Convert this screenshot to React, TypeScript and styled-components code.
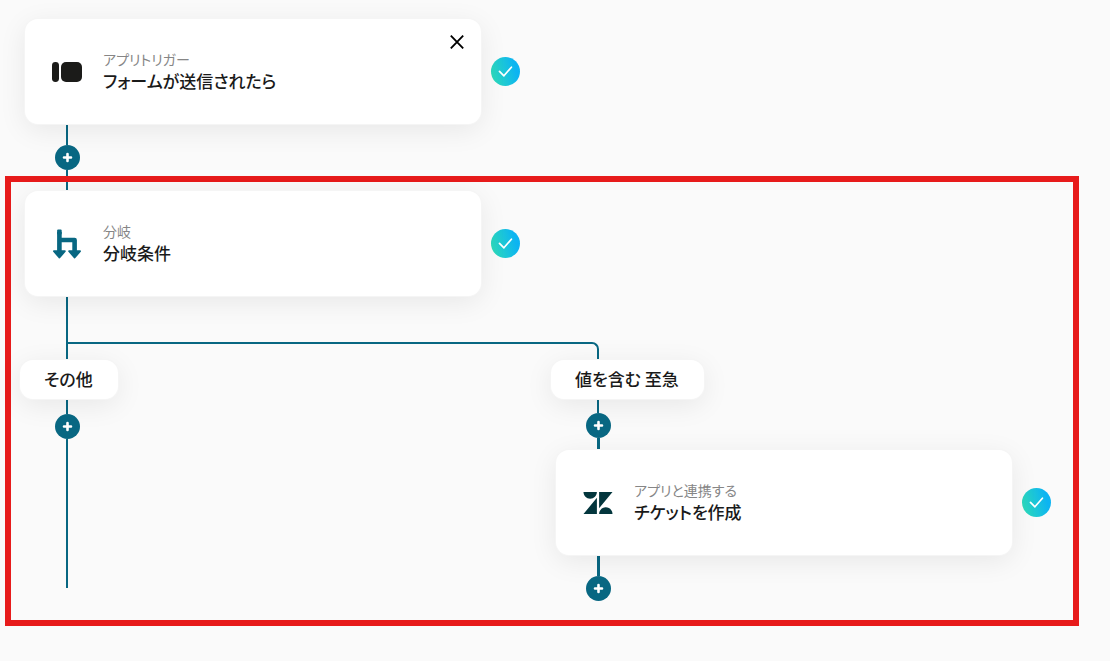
import React from "react";
import styled, { createGlobalStyle } from "styled-components";

const teal = "#086782";
const lift = "0 0 0 1px #f5f5f5, 0 6px 28px rgba(0, 0, 0, 0.08)";

const GlobalStyle = createGlobalStyle`
  *, *::before, *::after { box-sizing: border-box; }
  body {
    margin: 0;
    background: #fafafa;
    color: #1a1a1a;
    font-family: "Noto Sans CJK JP", "Noto Sans", sans-serif;
    font-feature-settings: "palt";
  }
`;

const Page = styled.main`
  padding: 19px 31px 35px 5px;
`;

/* Column of steps; everything hangs from its left edge. */
const Lane = styled.div`
  display: flex;
  flex-direction: column;
  align-items: flex-start;
  min-width: 0;
`;

const TriggerLane = styled(Lane)`
  padding-left: 15px;
`;

const Highlight = styled.section`
  border: 6px solid #e71b1b;
  padding: 0 0 19px 9px;
`;

const StepRow = styled.article`
  position: relative;
  z-index: 1;
  display: flex;
  align-items: center;
  gap: 10px;
  margin-left: 5px;
`;

const Card = styled.div`
  position: relative;
  display: flex;
  align-items: center;
  gap: 21px;
  width: 456px;
  height: 105px;
  padding-left: 27px;
  border-radius: 13px;
  background: #fff;
  box-shadow: ${lift};
`;

const Caption = styled.div`
  padding-bottom: 2px;
`;

const Kind = styled.p`
  margin: 0;
  font-size: 14px;
  line-height: 20px;
  color: #868686;
`;

const Title = styled.h2`
  margin: 0;
  font-size: 17px;
  line-height: 24px;
  font-weight: 500;
`;

const CloseButton = styled.button`
  position: absolute;
  top: 11px;
  right: 12px;
  display: grid;
  place-items: center;
  width: 24px;
  height: 24px;
  padding: 0;
  border: 0;
  background: none;
  color: #000;
  cursor: pointer;
`;

const Done = styled.span`
  display: grid;
  place-items: center;
  flex: none;
  width: 29px;
  height: 29px;
  border-radius: 50%;
  background: linear-gradient(75deg, #2fdcb8 5%, #0cb4f2 80%);
`;

const Stem = styled.div<{ $length: number; $thick?: boolean }>`
  width: ${(p) => (p.$thick ? 3 : 2)}px;
  height: ${(p) => p.$length}px;
  margin-left: 46px;
  background: ${teal};
`;

const AddButton = styled.button`
  position: relative;
  z-index: 2;
  display: grid;
  place-items: center;
  width: 25px;
  height: 25px;
  margin-left: 35px;
  padding: 0;
  border: 0;
  border-radius: 50%;
  background: ${teal};
  color: #fff;
  cursor: pointer;
`;

const Fork = styled.div`
  width: 533px;
  height: 18px;
  margin-left: 46px;
  border: 2px solid ${teal};
  border-bottom: 0;
  border-top-right-radius: 7px;
`;

const Branches = styled.div`
  display: grid;
  grid-template-columns: 531px 1fr;
`;

const Condition = styled.h3`
  position: relative;
  z-index: 1;
  margin: 0;
  padding: 0 25px 1px 24px;
  border-radius: 13px;
  background: #fff;
  box-shadow: ${lift};
  font-size: 17px;
  line-height: 38px;
  font-weight: 500;
  white-space: nowrap;
`;

const FormIcon = () => (
  <svg width="30" height="30" viewBox="0 0 30 30" fill="#1b1b19" aria-hidden="true">
    <rect x="0" y="5" width="7" height="20" rx="3.4" />
    <rect x="9" y="5" width="21" height="20" rx="5" />
  </svg>
);

const BranchIcon = () => (
  <svg width="30" height="30" viewBox="0 0 30 30" fill={teal} stroke={teal} aria-hidden="true">
    <path d="M7.4 3v20M7.4 11h15.2v12" fill="none" strokeWidth="4.6" strokeLinejoin="round" />
    <path d="M6.1 1.5h2.6v3H6.1z" strokeWidth="2" strokeLinejoin="round" />
    <path d="M2 22.2h10.8L7.4 28.4zM17.2 22.2H28l-5.4 6.2z" strokeWidth="2" strokeLinejoin="round" />
  </svg>
);

const ZendeskIcon = () => (
  <svg width="30" height="30" viewBox="0 0 24.8 24.8" fill="#03363d" aria-hidden="true">
    <path
      transform="translate(.4 .4)"
      d="M12.914 2.904V16.29L24 2.905H12.914zM0 2.906C0 5.966 2.483 8.45 5.543 8.45s5.542-2.484 5.543-5.544H0zm11.086 4.807L0 21.096h11.086V7.713zm7.37 7.84c-3.063 0-5.542 2.48-5.542 5.543H24c0-3.06-2.48-5.543-5.543-5.543z"
    />
  </svg>
);

const Add = () => (
  <AddButton type="button" aria-label="ステップを追加">
    <svg width="11" height="11" viewBox="0 0 11 11" stroke="currentColor" strokeWidth="2.6" strokeLinecap="round" aria-hidden="true">
      <path d="M5.5 2v7M2 5.5h7" />
    </svg>
  </AddButton>
);

type StepProps = {
  icon: React.ReactNode;
  kind: string;
  title: string;
  closable?: boolean;
};

const Step = ({ icon, kind, title, closable }: StepProps) => (
  <StepRow>
    <Card>
      {icon}
      <Caption>
        <Kind>{kind}</Kind>
        <Title>{title}</Title>
      </Caption>
      {closable && (
        <CloseButton type="button" aria-label="閉じる">
          <svg width="14" height="14" viewBox="0 0 14 14" stroke="currentColor" strokeWidth="1.8" aria-hidden="true">
            <path d="M.8.6l12.4 12.8M13.2.6L.8 13.4" />
          </svg>
        </CloseButton>
      )}
    </Card>
    <Done role="img" aria-label="設定済み">
      <svg width="15" height="11" viewBox="0 0 15 11" fill="none" stroke="#fff" strokeWidth="1.7" strokeLinecap="round" strokeLinejoin="round" aria-hidden="true">
        <path d="M1.5 5.4l4.4 4.4L13.4 1.2" />
      </svg>
    </Done>
  </StepRow>
);

export default function App() {
  return (
    <>
      <GlobalStyle />
      <Page>
        <TriggerLane>
          <Step icon={<FormIcon />} kind="アプリトリガー" title="フォームが送信されたら" closable />
          <Stem $length={21} />
          <Add />
          <Stem $length={6} />
        </TriggerLane>
        <Highlight>
          <Lane>
            <Stem $length={9} />
            <Step icon={<BranchIcon />} kind="分岐" title="分岐条件" />
            <Stem $length={46} />
            <Fork />
          </Lane>
          <Branches>
            <Lane>
              <Condition>その他</Condition>
              <Stem $length={15} />
              <Add />
              <Stem $length={149} />
            </Lane>
            <Lane>
              <Condition>値を含む 至急</Condition>
              <Stem $length={14} />
              <Add />
              <Stem $length={12} $thick />
              <Step icon={<ZendeskIcon />} kind="アプリと連携する" title="チケットを作成" />
              <Stem $length={21} $thick />
              <Add />
            </Lane>
          </Branches>
        </Highlight>
      </Page>
    </>
  );
}
